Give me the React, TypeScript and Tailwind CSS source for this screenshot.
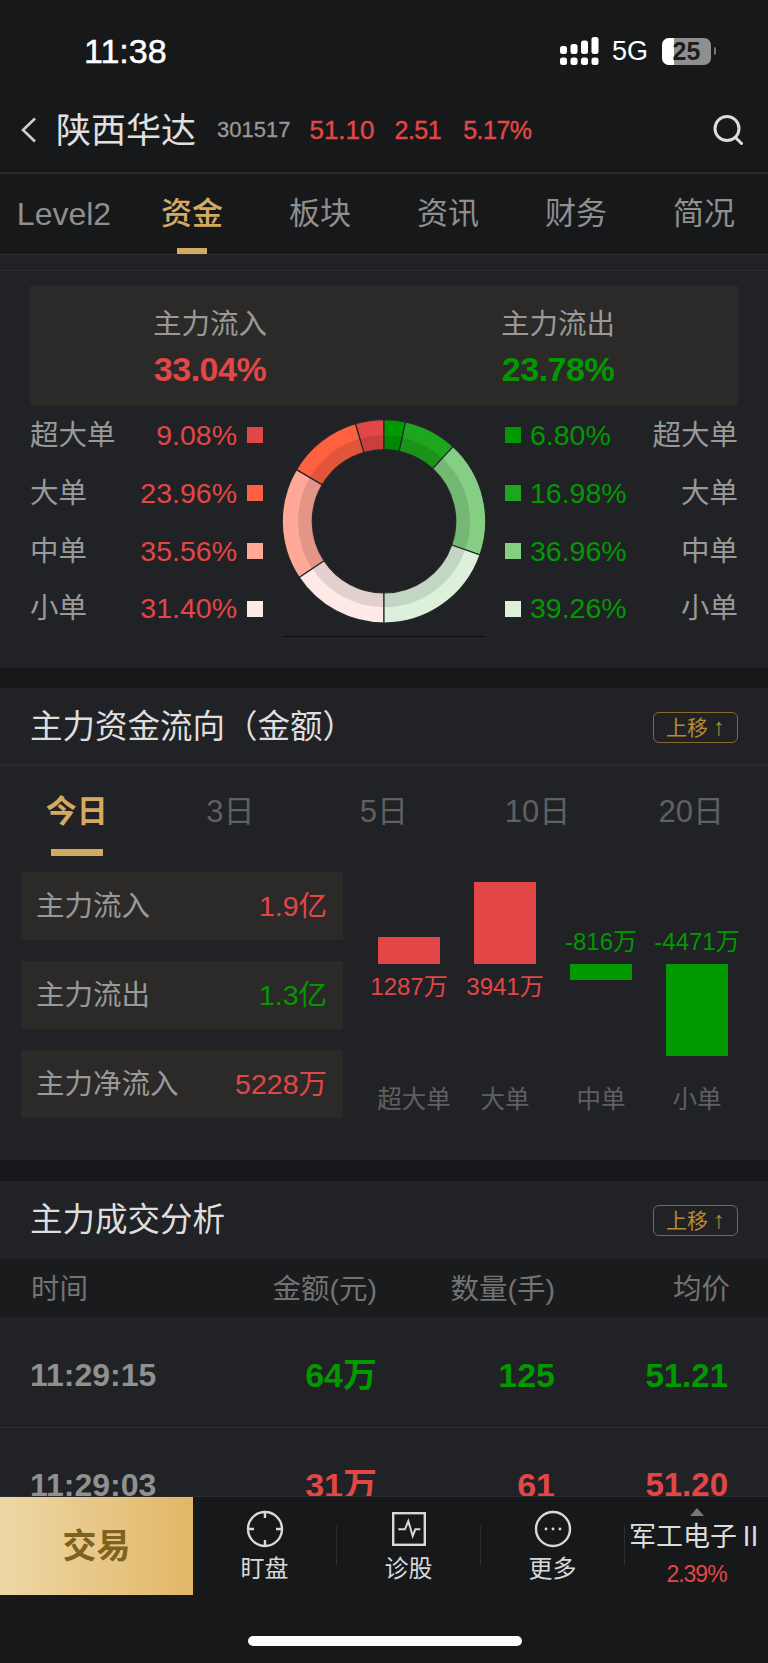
import React from "react";

const RED = "text-[#e24646]";
const GREEN = "text-[#009900]";

function arc(a0: number, a1: number, r0: number, r1: number, cx: number, cy: number) {
  const p = (a: number, r: number) => {
    const t = (a * Math.PI) / 180;
    return `${(cx + r * Math.sin(t)).toFixed(2)} ${(cy - r * Math.cos(t)).toFixed(2)}`;
  };
  const large = Math.abs(a1 - a0) > 180 ? 1 : 0;
  const sweep = a1 > a0 ? 1 : 0;
  return `M${p(a0, r1)}A${r1} ${r1} 0 ${large} ${sweep} ${p(a1, r1)}L${p(a1, r0)}A${r0} ${r0} 0 ${large} ${sweep ? 0 : 1} ${p(a0, r0)}Z`;
}

const leftSeg = [
  { v: 9.08, c: "#e24646" },
  { v: 23.96, c: "#ff6040" },
  { v: 35.56, c: "#ffa898" },
  { v: 31.4, c: "#fdeae6" },
];
const rightSeg = [
  { v: 6.8, c: "#009a00" },
  { v: 16.98, c: "#1fa61f" },
  { v: 36.96, c: "#84cf84" },
  { v: 39.26, c: "#dcf0dc" },
];

function Donut() {
  const cx = 104;
  const cy = 115.3;
  const parts: { d: string; s: string; c: string }[] = [];
  const add = (list: typeof leftSeg, dir: number) => {
    let a = 0;
    for (const item of list) {
      const next = a + (item.v / 100) * 180;
      parts.push({
        d: arc(dir * a, dir * next, 71.7, 101.7, cx, cy),
        s: arc(dir * a, dir * next, 71.7, 86, cx, cy),
        c: item.c,
      });
      a = next;
    }
  };
  add(leftSeg, -1);
  add(rightSeg, 1);
  return (
    <svg width="208" height="231" viewBox="0 0 208 231">
      {parts.map((p, i) => (
        <g key={i}>
          <path d={p.d} fill={p.c} />
          <path d={p.s} fill="#000" fillOpacity="0.11" />
          <path d={p.d} fill="none" stroke="#26272a" strokeWidth="1.2" />
        </g>
      ))}
      <line x1="2" x2="206" y1="230.5" y2="230.5" stroke="#0d0e10" strokeWidth="1" />
    </svg>
  );
}

function MoveButton() {
  return (
    <div className="w-[85px] h-[31px] border border-[#8a6a2c] rounded-[6px] flex items-center justify-center text-[21px] text-[#b98a35] leading-none">
      上移
      <span className="ml-[5px] text-[24px] font-light">↑</span>
    </div>
  );
}

function Signal() {
  const cols = [
    { x: 0, top: 9 },
    { x: 10.5, top: 7 },
    { x: 21, top: 3.5 },
    { x: 31.5, top: 0 },
  ];
  return (
    <svg width="39" height="28" viewBox="0 0 39 28">
      {cols.map((c) => (
        <g key={c.x} fill="#fff">
          <rect x={c.x} y={c.top} width="7" height={17 - c.top} rx="2.5" />
          <rect x={c.x} y="20.5" width="7" height="7.5" rx="2.5" />
        </g>
      ))}
    </svg>
  );
}

function Battery() {
  return (
    <div className="flex items-center ml-[14px]">
      <div className="relative w-[49px] h-[27px] rounded-[7px] bg-[#8f8f8f] overflow-hidden flex items-center justify-center">
        <div className="absolute left-0 top-0 bottom-0 w-[12px] bg-white" />
        <span className="relative text-[25px] font-bold text-[#1c1c1e] leading-none">25</span>
      </div>
      <div className="ml-[3px] w-[2px] h-[8px] rounded-r-sm bg-[#777]" />
    </div>
  );
}

function SectionHeader({ title, box }: { title: string; box: string }) {
  return (
    <div className={`flex items-center justify-between pl-[30px] pr-[30px] ${box}`}>
      <span className="text-[32.5px] text-[#dedede] leading-none">{title}</span>
      <MoveButton />
    </div>
  );
}

const breakdownLeft = [
  { l: "超大单", v: "9.08%", c: "bg-[#e24646]" },
  { l: "大单", v: "23.96%", c: "bg-[#ff6040]" },
  { l: "中单", v: "35.56%", c: "bg-[#ffa898]" },
  { l: "小单", v: "31.40%", c: "bg-[#fdeae6]" },
];
const breakdownRight = [
  { l: "超大单", v: "6.80%", c: "bg-[#009a00]" },
  { l: "大单", v: "16.98%", c: "bg-[#1fa61f]" },
  { l: "中单", v: "36.96%", c: "bg-[#84cf84]" },
  { l: "小单", v: "39.26%", c: "bg-[#dcf0dc]" },
];

const bars = [
  { v: "1287万", pos: true, h: 27, lab: "超大单", top: 65, labBox: "pl-[10px]" },
  { v: "3941万", pos: true, h: 82, lab: "大单", top: 10, labBox: "" },
  { v: "-816万", pos: false, h: 16, lab: "中单", top: 55, labBox: "" },
  { v: "-4471万", pos: false, h: 92, lab: "小单", top: 55, labBox: "" },
];

const summary = [
  { l: "主力流入", v: "1.9亿", c: RED },
  { l: "主力流出", v: "1.3亿", c: GREEN },
  { l: "主力净流入", v: "5228万", c: RED },
];

const trades = [
  { t: "11:29:15", a: "64万", q: "125", p: "51.21", c: GREEN, row: "h-[111px] pt-[6px] border-b border-[#2d2e31]" },
  { t: "11:29:03", a: "31万", q: "61", p: "51.20", c: RED, row: "h-[111px] pt-[2px]" },
];

const tabs = ["Level2", "资金", "板块", "资讯", "财务", "简况"];
const ranges = ["今日", "3日", "5日", "10日", "20日"];

export default function App() {
  return (
    <div className="w-[768px] h-[1663px] overflow-hidden flex flex-col bg-[#17181a] [font-family:'Liberation_Sans','Noto_Sans_CJK_SC',sans-serif]">
      {/* Status bar */}
      <div className="h-[88px] shrink-0 flex items-center pt-[14px] pl-[84px] pr-[52px]">
        <span className="text-[34px] text-white leading-none [-webkit-text-stroke:0.5px_white]">11:38</span>
        <div className="ml-auto flex items-center">
          <Signal />
          <span className="ml-[13px] text-[27px] text-white leading-none">5G</span>
          <Battery />
        </div>
      </div>

      {/* Header */}
      <div className="h-[86px] shrink-0 flex items-center pl-[20px] pr-[24px] border-b-2 border-[#2b2c2e]">
        <svg width="16" height="26" viewBox="0 0 16 26" fill="none" stroke="#cfcfcf" strokeWidth="2.6">
          <path d="M15 1.5 L3 13 L15 24.5" />
        </svg>
        <span className="ml-[20px] text-[35px] text-[#e0e0e0] leading-none">陕西华达</span>
        <span className="ml-[21px] text-[22px] text-[#989898] leading-none [-webkit-text-stroke:0.3px_#989898]">301517</span>
        <span className={`ml-[19px] text-[26px] leading-none [-webkit-text-stroke:0.4px_#e24646] ${RED}`}>51.10</span>
        <span className={`ml-[20px] text-[25px] tracking-[-0.5px] leading-none [-webkit-text-stroke:0.4px_#e24646] ${RED}`}>2.51</span>
        <span className={`ml-[22px] text-[25px] tracking-[-0.5px] leading-none [-webkit-text-stroke:0.4px_#e24646] ${RED}`}>5.17%</span>
        <svg className="ml-auto" width="32" height="30" viewBox="0 0 32 30" fill="none" stroke="#dcdcdc" strokeWidth="3">
          <circle cx="15" cy="13.5" r="12" />
          <path d="M23.5 22.5 L29.5 28.5" strokeLinecap="round" />
        </svg>
      </div>

      {/* Tabs */}
      <div className="h-[81px] shrink-0 grid grid-cols-6 border-b border-[#2b2c2e]">
        {tabs.map((t, i) => (
          <div key={t} className="flex flex-col items-center">
            <span
              className={
                i === 1
                  ? "mt-[20px] h-[40px] leading-[40px] text-[31px] font-medium text-[#d4aa63]"
                  : i === 0
                    ? "mt-[20px] h-[40px] leading-[40px] text-[32px] text-[#8f8f8f]"
                    : "mt-[20px] h-[40px] leading-[40px] text-[31px] text-[#8f8f8f]"
              }
            >
              {t}
            </span>
            {i === 1 && <div className="mt-[14px] w-[30px] h-[6px] bg-[#d4aa63]" />}
          </div>
        ))}
      </div>

      <div className="flex-1 min-h-0 overflow-hidden">
        {/* Band */}
        <div className="h-[16px] bg-[#212225] border-b border-[#2b2c2e]" />

        {/* Ratio section */}
        <div className="h-[397px] bg-[#212225] px-[30px] pt-[15px]">
          <div className="h-[120px] bg-[#2c2a28] grid grid-cols-2">
            <div className="flex flex-col items-center pl-[6px]">
              <span className="mt-[20px] text-[28.5px] leading-[36px] text-[#999]">主力流入</span>
              <span className={`mt-[9px] text-[34px] font-bold leading-[36px] tracking-[-0.5px] ${RED}`}>33.04%</span>
            </div>
            <div className="flex flex-col items-center pr-[6px]">
              <span className="mt-[20px] text-[28.5px] leading-[36px] text-[#999]">主力流出</span>
              <span className={`mt-[9px] text-[34px] font-bold leading-[36px] tracking-[-0.5px] ${GREEN}`}>23.78%</span>
            </div>
          </div>
          <div className="flex h-[231px]">
            <div className="w-[233px] flex flex-col">
              {breakdownLeft.map((r) => (
                <div key={r.l} className="flex-1 flex items-center pt-[1px]">
                  <span className="text-[28.5px] text-[#999] leading-none">{r.l}</span>
                  <span className={`ml-auto text-[28.5px] leading-none ${RED}`}>{r.v}</span>
                  <span className={`ml-[10px] w-[16px] h-[16px] ${r.c}`} />
                </div>
              ))}
            </div>
            <div className="w-[242px] flex justify-center">
              <Donut />
            </div>
            <div className="w-[233px] flex flex-col">
              {breakdownRight.map((r) => (
                <div key={r.l} className="flex-1 flex items-center pt-[1px]">
                  <span className={`w-[16px] h-[16px] ${r.c}`} />
                  <span className={`ml-[9px] text-[28.5px] leading-none ${GREEN}`}>{r.v}</span>
                  <span className="ml-auto text-[28.5px] text-[#999] leading-none">{r.l}</span>
                </div>
              ))}
            </div>
          </div>
        </div>

        <div className="h-[20px]" />

        {/* Flow section */}
        <div className="h-[472px] bg-[#212225]">
          <div className="border-b-2 border-[#28292c]">
            <SectionHeader title="主力资金流向（金额）" box="h-[76px] pt-[2px]" />
          </div>
          <div className="h-[106px] grid grid-cols-5">
            {ranges.map((r, i) => (
              <div key={r} className="flex flex-col items-center">
                <span
                  className={
                    i === 0
                      ? "mt-[26px] h-[40px] leading-[40px] text-[31px] font-bold text-[#d4aa63]"
                      : "mt-[26px] h-[40px] leading-[40px] text-[31px] text-[#5f6062]"
                  }
                >
                  {r}
                </span>
                {i === 0 && <div className="mt-[17px] w-[52px] h-[7px] bg-[#d4aa63]" />}
              </div>
            ))}
          </div>
          <div className="flex pl-[21px]">
            <div className="w-[322px] flex flex-col gap-[21px]">
              {summary.map((s) => (
                <div key={s.l} className="h-[68px] bg-[#2c2a28] flex items-center justify-between pl-[15px] pr-[16px]">
                  <span className="text-[28.5px] text-[#999] leading-none">{s.l}</span>
                  <span className={`text-[28.5px] leading-none ${s.c}`}>{s.v}</span>
                </div>
              ))}
            </div>
            <div className="ml-[18px] w-[384px] flex flex-col">
              <div className="h-[204px] grid grid-cols-4">
                {bars.map((b) => (
                  <div key={b.v} className="flex flex-col items-center" style={{ paddingTop: b.top }}>
                    {!b.pos && <span className={`h-[30px] leading-[30px] text-[24px] whitespace-nowrap ${GREEN}`}>{b.v}</span>}
                    <div
                      className={b.pos ? "w-[62px] bg-[#e24646]" : "mt-[7px] w-[62px] bg-[#009900]"}
                      style={{ height: b.h }}
                    />
                    {b.pos && <span className={`mt-[8px] h-[30px] leading-[30px] text-[24px] whitespace-nowrap ${RED}`}>{b.v}</span>}
                  </div>
                ))}
              </div>
              <div className="h-[30px] mt-[9px] grid grid-cols-4">
                {bars.map((b) => (
                  <span key={b.lab} className={`text-center text-[24.5px] leading-[30px] text-[#5f6062] ${b.labBox}`}>
                    {b.lab}
                  </span>
                ))}
              </div>
            </div>
          </div>
        </div>

        <div className="h-[21px]" />

        {/* Trades section */}
        <div className="bg-[#212225]">
          <SectionHeader title="主力成交分析" box="h-[78px]" />
          <div className="h-[58px] pt-[3px] bg-[#1a1b1d] grid grid-cols-[150px_197px_178px_175px] items-center pl-[30px] text-[28.5px] text-[#737373] leading-none">
            <span className="pl-[1px]">时间</span>
            <span className="text-right">金额(元)</span>
            <span className="text-right">数量(手)</span>
            <span className="text-right">均价</span>
          </div>
          {trades.map((r) => (
            <div key={r.t} className={`grid grid-cols-[150px_197px_178px_175px] items-center pl-[30px] ${r.row}`}>
              <span className="text-[32px] font-bold text-[#909090] leading-none">{r.t}</span>
              <span className={`text-right text-[34px] font-bold leading-none ${r.c}`}>{r.a}</span>
              <span className={`text-right text-[34px] font-bold leading-none ${r.c}`}>{r.q}</span>
              <span className={`text-right text-[33px] font-bold leading-none pr-[2px] ${r.c}`}>{r.p}</span>
            </div>
          ))}
        </div>
      </div>

      {/* Bottom bar */}
      <div className="h-[167px] shrink-0 bg-[#17181a] border-t border-[#2a2b2d] relative">
        <div className="flex items-start">
          <div className="w-[193px] h-[98px] bg-gradient-to-r from-[#eed7a5] to-[#e1b766] flex items-center justify-center">
            <span className="text-[34px] font-bold text-[#7d6220] leading-none">交易</span>
          </div>
          <div className="flex-1 flex flex-col items-center">
            <svg className="mt-[13px]" width="38" height="38" viewBox="0 0 38 38" fill="none" stroke="#d8d8d8" strokeWidth="2.4">
              <circle cx="19" cy="19" r="17" />
              <path d="M19 2 V8 M19 30 V36 M2 19 H8 M30 19 H36" />
            </svg>
            <span className="mt-[6px] text-[24px] leading-[30px] text-[#d8d8d8]">盯盘</span>
          </div>
          <div className="mt-[29px] w-px h-[39px] bg-[#2c2d2f]" />
          <div className="flex-1 flex flex-col items-center">
            <svg className="mt-[14px]" width="36" height="36" viewBox="0 0 36 36" fill="none" stroke="#d8d8d8" strokeWidth="2.4">
              <rect x="2.2" y="2.2" width="31.6" height="31.6" />
              <path d="M7.3 18.3 H14 L17.3 10 L21.7 25 L24.3 18.3 H29.3" strokeWidth="2" />
            </svg>
            <span className="mt-[7px] text-[24px] leading-[30px] text-[#d8d8d8]">诊股</span>
          </div>
          <div className="mt-[29px] w-px h-[39px] bg-[#2c2d2f]" />
          <div className="flex-1 flex flex-col items-center">
            <svg className="mt-[13px]" width="38" height="38" viewBox="0 0 38 38" fill="none" stroke="#d8d8d8" strokeWidth="2.4">
              <circle cx="19" cy="19" r="17" />
              <circle cx="12" cy="19" r="1.4" fill="#d8d8d8" stroke="none" />
              <circle cx="19" cy="19" r="1.4" fill="#d8d8d8" stroke="none" />
              <circle cx="26" cy="19" r="1.4" fill="#d8d8d8" stroke="none" />
            </svg>
            <span className="mt-[6px] text-[24px] leading-[30px] text-[#d8d8d8]">更多</span>
          </div>
          <div className="mt-[29px] w-px h-[39px] bg-[#2c2d2f]" />
          <div className="flex-1 flex flex-col items-center">
            <svg className="mt-[11px]" width="14" height="8" viewBox="0 0 14 8">
              <path d="M7 0 L14 8 H0 Z" fill="#77787a" />
            </svg>
            <span className="mt-[6px] text-[27px] leading-[30px] text-[#dcdcdc] whitespace-nowrap">军工电子Ⅱ</span>
            <span className={`mt-[7px] text-[23px] tracking-[-1px] leading-[30px] ${RED}`}>2.39%</span>
          </div>
        </div>
        <div className="absolute left-[248px] top-[139px] w-[274px] h-[10px] rounded-full bg-white" />
      </div>
    </div>
  );
}
